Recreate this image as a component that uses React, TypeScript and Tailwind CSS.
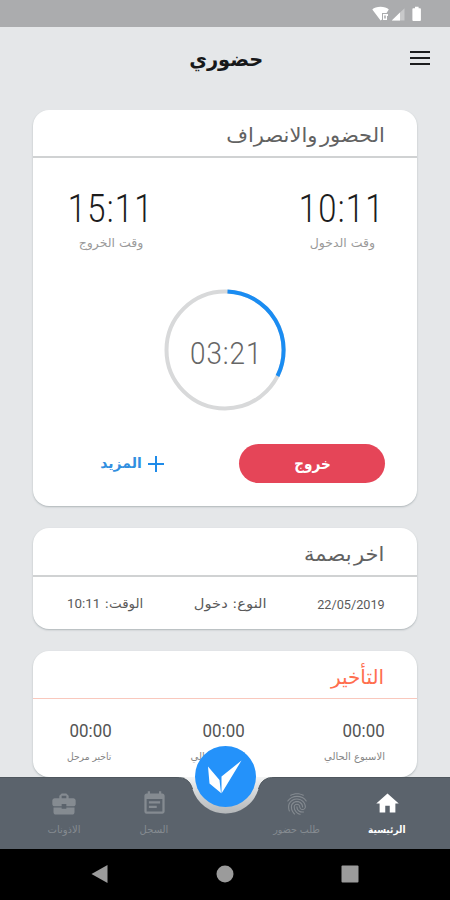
import type { ReactNode } from "react";
import { MdBusinessCenter, MdEventNote, MdFingerprint, MdHome } from "react-icons/md";

const arabic = "font-['DejaVu_Sans',sans-serif]";
const digits = "font-[Roboto,'Open_Sans',sans-serif]";

function Label({ box, text, children }: { box: string; text: string; children: ReactNode }) {
  return (
    <span className={`flex shrink-0 items-center justify-center ${box}`}>
      <span className={`shrink-0 whitespace-nowrap ${text}`}>{children}</span>
    </span>
  );
}

function StatusBar() {
  return (
    <div dir="ltr" className="flex h-[27px] shrink-0 items-center justify-end bg-[#abacae] pr-[27px]">
      <svg width="52" height="16" viewBox="0 0 52 16" fill="#fff">
        <path d="M1.300 3.600C4.500-.1 14.500-.1 17.800 3.600L15.500 7H11V13.500L9.600 14.500z" />
        <path d="M12 8h5v2h-1v4h-4zM13.200 9.500v3h1.600v-3z" fillRule="evenodd" />
        <path d="M20.800 14.500 33.500 2.200v12.300z" opacity=".35" />
        <path d="M20.800 14.500 29 6.500v8z" />
        <path d="M42.300 2.200h1.700V.8h3.600v1.400h1.500q.8 0 .8.8v11q0 .9-.9.900h-6.700q-.9 0-.9-.9V3q0-.8.9-.8z" />
      </svg>
    </div>
  );
}

function Time({ value, caption }: { value: string; caption: string }) {
  return (
    <div className="flex w-[84px] flex-col items-center">
      <Label box="h-10 w-[84px]" text={`${digits} text-[39.500px] font-light tracking-[1.500px] scale-x-[.83] text-[#1c1c1c]`}>{value}</Label>
      <Label box="mt-[2px] h-6 w-16" text={`${arabic} text-[12px] scale-x-[1.04] text-[#9a9a9a]`}>{caption}</Label>
    </div>
  );
}

function Delay({ caption, box, text }: { caption: string; box: string; text: string }) {
  return (
    <div className="flex flex-col items-start">
      <Label box="h-6 w-[42px]" text={`${digits} text-[19px] scale-x-[.89] text-[#555]`}>00:00</Label>
      <Label box={`mt-[3px] h-5 ${box}`} text={`${arabic} text-[#858585] ${text}`}>{caption}</Label>
    </div>
  );
}

function Tab({ icon, caption, text, box }: { icon: ReactNode; caption: string; text: string; box: string }) {
  return (
    <div className={`flex flex-col items-center ${box}`}>
      <span className="flex h-[27px] items-center">{icon}</span>
      <Label box="mt-[2px] h-5 w-12" text={`${arabic} ${text}`}>{caption}</Label>
    </div>
  );
}

export default function App() {
  return (
    <div dir="rtl" className="relative flex h-[900px] w-[450px] flex-col overflow-hidden bg-[#e5e7e9]">
      <StatusBar />
      <header className="flex h-[83px] shrink-0 items-start justify-between px-5 pt-[18px]">
        <div className="mt-[6px] flex w-5 flex-col gap-[4px]">
          <i className="h-[2px] bg-[#1c1d1e]" />
          <i className="h-[2px] bg-[#1c1d1e]" />
          <i className="h-[2px] bg-[#1c1d1e]" />
        </div>
        <Label box="h-7 w-[72px]" text={`${arabic} text-[20px] scale-x-[.97] font-bold text-[#17181a]`}>حضوري</Label>
        <div className="w-[22px]" />
      </header>

      <main className="-mb-[83px] flex h-[750px] shrink-0 flex-col gap-[22px] overflow-hidden px-[33px]">
        <section className="h-[396px] shrink-0 rounded-[16px] bg-white shadow-[0_1px_2px_#aeb5b8]">
          <div className="flex h-12 items-center border-b-2 border-[#d0d2d3] pr-[32px]">
            <Label box="w-[159px] h-8 mt-1" text={`${arabic} text-[20px] [word-spacing:-4px] scale-x-[1.050] text-[#626262]`}>الحضور والانصراف</Label>
          </div>
          <div className="flex justify-between pt-[31px] pr-[33px] pl-[36px]">
            <Time value="10:11" caption="وقت الدخول" />
            <Time value="15:11" caption="وقت الخروج" />
          </div>
          <div className="relative mx-auto mt-[34px] flex size-[122px] items-center justify-center">
            <svg className="absolute inset-0" width="122" height="122" viewBox="0 0 122 122" fill="none" strokeWidth="4">
              <circle cx="61" cy="61" r="58.500" stroke="#d8d9da" />
              <path d="M63.500 2.500A58.500 58.500 0 0 1 113.500 87" stroke="#1a8cf2" />
            </svg>
            <Label box="h-8 w-[70px] mt-2 ml-[2px]" text={`${digits} text-[31px] font-light tracking-[1px] scale-x-[.9] text-[#666]`}>03:21</Label>
          </div>
          <div className="mt-[33px] flex items-center justify-between pr-[32px] pl-[67px]">
            <button className="flex h-[39px] w-[146px] items-center justify-center rounded-full bg-[#e54558]">
              <Label box="h-7 w-9" text={`${arabic} text-[16px] scale-x-[.85] font-bold text-white`}>خروج</Label>
            </button>
            <button className="flex items-center gap-[6px]">
              <svg width="16" height="16" stroke="#1e8be9" strokeWidth="2"><path d="M8 0v16M0 8h16" /></svg>
              <Label box="h-7 w-[42px]" text={`${arabic} text-[14px] font-bold text-[#318fe0]`}>المزيد</Label>
            </button>
          </div>
        </section>

        <section className="h-[101px] shrink-0 rounded-[16px] bg-white shadow-[0_1px_2px_#aeb5b8]">
          <div className="flex h-[49px] items-center border-b-2 border-[#d0d2d3] pr-[33px]">
            <Label box="w-[80px] h-8 mt-1" text={`${arabic} text-[20px] [word-spacing:-4px] scale-x-[1.050] text-[#626262]`}>اخر بصمة</Label>
          </div>
          <div className="flex h-[54px] items-center justify-between pr-[32px] pl-[34px]">
            <Label box="w-[68px]" text={`${digits} text-[13.500px] scale-x-[.94] text-[#5a5a5a]`}>22/05/2019</Label>
            <Label box="w-[73px]" text={`${arabic} text-[13px] scale-x-[1.130] text-[#5a5a5a]`}>النوع: دخول</Label>
            <Label box="w-[76px]" text={`${arabic} text-[13px] scale-x-[1.030] text-[#5a5a5a]`}>الوقت: <span className={digits}>10:11</span></Label>
          </div>
        </section>

        <section className="h-[126px] shrink-0 rounded-[16px] bg-white shadow-[0_1px_2px_#aeb5b8]">
          <div className="flex h-[48px] items-center border-b border-[#f9c8bd] pr-[33px]">
            <Label box="w-[53px] h-8 mt-1" text={`${arabic} text-[20px] text-[#ff6e4e]`}>التأخير</Label>
          </div>
          <div className="flex justify-between pt-[20px] pr-[32px] pl-[34px]">
            <Delay caption="الاسبوع الحالي" box="w-[61px]" text="text-[10px]" />
            <Delay caption="الشهر الحالي" box="w-[54px]" text="text-[10px]" />
            <Delay caption="تاخير مرحل" box="w-[45px]" text="text-[10px] scale-x-[.92]" />
          </div>
        </section>
      </main>

      <nav className="relative h-[72px] shrink-0">
        <svg className="absolute top-0 left-0" width="450" height="72" viewBox="0 0 450 72">
          <defs>
            <linearGradient id="rim" x1="0" y1="0" x2="0" y2="1">
              <stop offset="0" stopColor="#f4f5f5" />
              <stop offset=".4" stopColor="#d6d8d9" />
              <stop offset="1" stopColor="#b4b7b9" />
            </linearGradient>
          </defs>
          <path d="M184 0H268L259 12A35 35 0 0 1 192 12z" fill="url(#rim)" />
          <path d="M0 .5H176C186 .5 190 4 192.500 12A34.500 34.500 0 0 0 258.500 12C261 4 265 .5 275 .5H450V72H0z" fill="#5b636c" />
          <path d="M0 .5H176C186 .5 190 4 192.500 12M258.500 12C261 4 265 .5 275 .5H450" fill="none" stroke="#4f575e" />
        </svg>
        <div className="relative flex pt-[13px] text-[#858b91]">
          <Tab box="mr-[39px] w-12" icon={<MdHome size={27} color="#fff" />} caption="الرئيسية" text="text-[10px] scale-x-[.9] font-bold text-white" />
          <Tab box="mr-[42px] w-12" icon={<MdFingerprint size={26} />} caption="طلب حضور" text="text-[10px] scale-x-[.95]" />
          <Tab box="mr-[95px] w-12" icon={<MdEventNote size={27} />} caption="السجل" text="text-[10px]" />
          <Tab box="mr-[42px] w-12" icon={<MdBusinessCenter size={28} />} caption="الاذونات" text="text-[10px]" />
        </div>
      </nav>

      <div className="absolute top-[746px] left-[195px] size-[61px] rounded-full bg-[#2492fa]">
        <svg width="61" height="61" viewBox="0 0 61 61" fill="#fff">
          <path d="M13 20.500 24.500 34 26 47 14.500 37.500zM26.500 30.500 46.500 14.500 26.500 47.500z" />
        </svg>
      </div>

      <footer dir="ltr" className="flex h-[51px] items-center justify-center bg-black pb-[1px]">
        <svg width="268" height="20" viewBox="0 0 268 20" fill="#9b9b9b">
          <path d="M.5 10 16.500 1v18z" />
          <circle cx="134" cy="10" r="8.500" />
          <rect x="250.500" y="1.500" width="17" height="17" rx="1" />
        </svg>
      </footer>
    </div>
  );
}
